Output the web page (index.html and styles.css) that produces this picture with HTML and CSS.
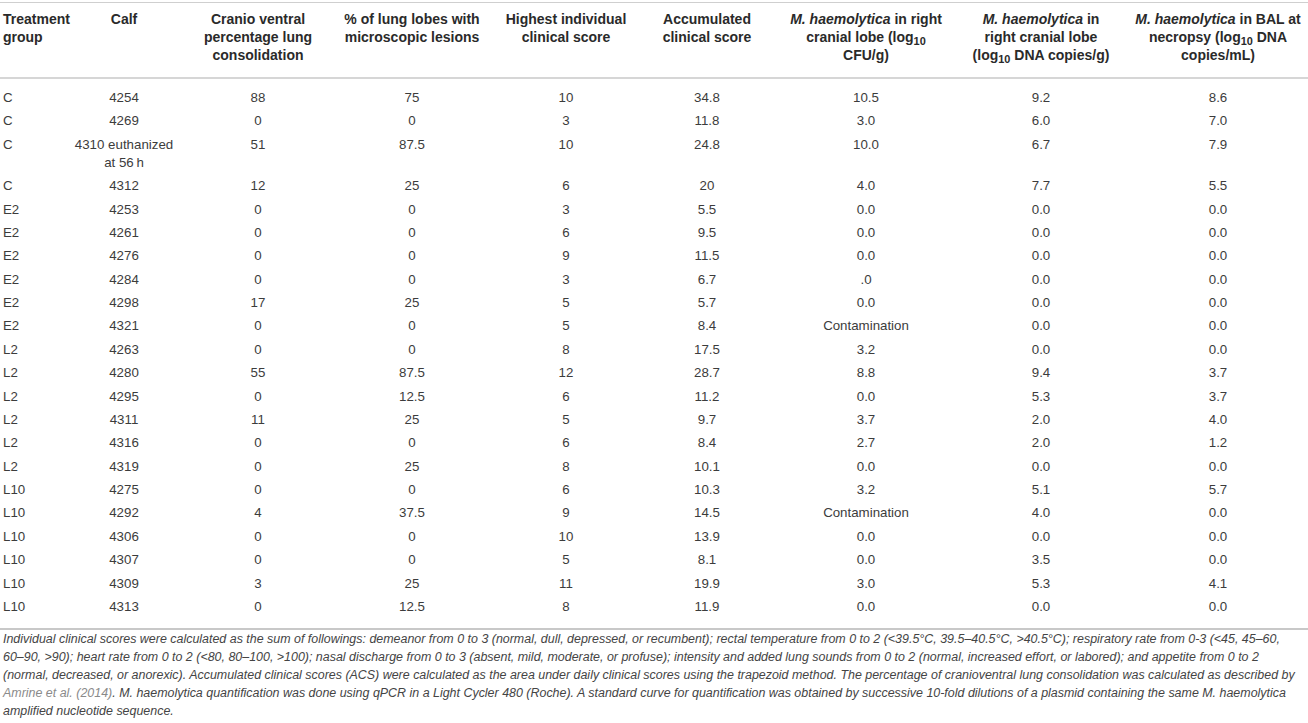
FILE: index.html
```html
<!DOCTYPE html>
<html lang="en">
<head>
<meta charset="utf-8">
<title>Table</title>
<link rel="stylesheet" href="styles.css">
</head>
<body>
<div class="page">
<table class="data">
<colgroup>
<col class="c1"><col class="c2"><col class="c3"><col class="c4"><col class="c5"><col class="c6"><col class="c7"><col class="c8"><col class="c9">
</colgroup>
<thead>
<tr>
<th class="first">Treatment group</th>
<th>Calf</th>
<th>Cranio ventral percentage lung consolidation</th>
<th>% of lung lobes with microscopic lesions</th>
<th>Highest individual clinical score</th>
<th>Accumulated clinical score</th>
<th class="narrow"><i>M. haemolytica</i> in right cranial lobe (log<sub>10</sub> CFU/g)</th>
<th><i>M. haemolytica</i> in right cranial lobe (log<sub>10</sub> DNA copies/g)</th>
<th class="last"><i>M. haemolytica</i> in BAL at necropsy (log<sub>10</sub> DNA copies/mL)</th>
</tr>
</thead>
<tbody>
<tr><td class="first">C</td><td>4254</td><td>88</td><td>75</td><td>10</td><td>34.8</td><td>10.5</td><td>9.2</td><td class="last">8.6</td></tr>
<tr><td class="first">C</td><td>4269</td><td>0</td><td>0</td><td>3</td><td>11.8</td><td>3.0</td><td>6.0</td><td class="last">7.0</td></tr>
<tr><td class="first">C</td><td>4310 euthanized at 56&#8201;h</td><td>51</td><td>87.5</td><td>10</td><td>24.8</td><td>10.0</td><td>6.7</td><td class="last">7.9</td></tr>
<tr><td class="first">C</td><td>4312</td><td>12</td><td>25</td><td>6</td><td>20</td><td>4.0</td><td>7.7</td><td class="last">5.5</td></tr>
<tr><td class="first">E2</td><td>4253</td><td>0</td><td>0</td><td>3</td><td>5.5</td><td>0.0</td><td>0.0</td><td class="last">0.0</td></tr>
<tr><td class="first">E2</td><td>4261</td><td>0</td><td>0</td><td>6</td><td>9.5</td><td>0.0</td><td>0.0</td><td class="last">0.0</td></tr>
<tr><td class="first">E2</td><td>4276</td><td>0</td><td>0</td><td>9</td><td>11.5</td><td>0.0</td><td>0.0</td><td class="last">0.0</td></tr>
<tr><td class="first">E2</td><td>4284</td><td>0</td><td>0</td><td>3</td><td>6.7</td><td>.0</td><td>0.0</td><td class="last">0.0</td></tr>
<tr><td class="first">E2</td><td>4298</td><td>17</td><td>25</td><td>5</td><td>5.7</td><td>0.0</td><td>0.0</td><td class="last">0.0</td></tr>
<tr><td class="first">E2</td><td>4321</td><td>0</td><td>0</td><td>5</td><td>8.4</td><td>Contamination</td><td>0.0</td><td class="last">0.0</td></tr>
<tr><td class="first">L2</td><td>4263</td><td>0</td><td>0</td><td>8</td><td>17.5</td><td>3.2</td><td>0.0</td><td class="last">0.0</td></tr>
<tr><td class="first">L2</td><td>4280</td><td>55</td><td>87.5</td><td>12</td><td>28.7</td><td>8.8</td><td>9.4</td><td class="last">3.7</td></tr>
<tr><td class="first">L2</td><td>4295</td><td>0</td><td>12.5</td><td>6</td><td>11.2</td><td>0.0</td><td>5.3</td><td class="last">3.7</td></tr>
<tr><td class="first">L2</td><td>4311</td><td>11</td><td>25</td><td>5</td><td>9.7</td><td>3.7</td><td>2.0</td><td class="last">4.0</td></tr>
<tr><td class="first">L2</td><td>4316</td><td>0</td><td>0</td><td>6</td><td>8.4</td><td>2.7</td><td>2.0</td><td class="last">1.2</td></tr>
<tr><td class="first">L2</td><td>4319</td><td>0</td><td>25</td><td>8</td><td>10.1</td><td>0.0</td><td>0.0</td><td class="last">0.0</td></tr>
<tr><td class="first">L10</td><td>4275</td><td>0</td><td>0</td><td>6</td><td>10.3</td><td>3.2</td><td>5.1</td><td class="last">5.7</td></tr>
<tr><td class="first">L10</td><td>4292</td><td>4</td><td>37.5</td><td>9</td><td>14.5</td><td>Contamination</td><td>4.0</td><td class="last">0.0</td></tr>
<tr><td class="first">L10</td><td>4306</td><td>0</td><td>0</td><td>10</td><td>13.9</td><td>0.0</td><td>0.0</td><td class="last">0.0</td></tr>
<tr><td class="first">L10</td><td>4307</td><td>0</td><td>0</td><td>5</td><td>8.1</td><td>0.0</td><td>3.5</td><td class="last">0.0</td></tr>
<tr><td class="first">L10</td><td>4309</td><td>3</td><td>25</td><td>11</td><td>19.9</td><td>3.0</td><td>5.3</td><td class="last">4.1</td></tr>
<tr><td class="first">L10</td><td>4313</td><td>0</td><td>12.5</td><td>8</td><td>11.9</td><td>0.0</td><td>0.0</td><td class="last">0.0</td></tr>
</tbody>
</table>
<p class="note">Individual clinical scores were calculated as the sum of followings: demeanor from 0 to 3 (normal, dull, depressed, or recumbent); rectal temperature from 0 to 2 (&lt;39.5°C, 39.5–40.5°C, &gt;40.5°C); respiratory rate from 0-3 (&lt;45, 45–60, 60–90, &gt;90); heart rate from 0 to 2 (&lt;80, 80–100, &gt;100); nasal discharge from 0 to 3 (absent, mild, moderate, or profuse); intensity and added lung sounds from 0 to 2 (normal, increased effort, or labored); and appetite from 0 to 2 (normal, decreased, or anorexic). Accumulated clinical scores (ACS) were calculated as the area under daily clinical scores using the trapezoid method. The percentage of cranioventral lung consolidation was calculated as described by <a class="ref" href="#">Amrine et al. (2014)</a>. M. haemolytica quantification was done using qPCR in a Light Cycler 480 (Roche). A standard curve for quantification was obtained by successive 10-fold dilutions of a plasmid containing the same M. haemolytica amplified nucleotide sequence.</p>
</div>
</body>
</html>
```

FILE: styles.css
```css
html, body {
  margin: 0;
  padding: 0;
  background: #ffffff;
}

.page {
  padding-top: 2px;
  width: 1308px;
  font-family: "Liberation Sans", Arial, Helvetica, sans-serif;
}

.data {
  width: 1308px;
  table-layout: fixed;
  border-collapse: collapse;
  border-top: 1px solid #cfcfcf;
  border-bottom: 2px solid #c8c8c8;
}

.c1 { width: 72px; }
.c2 { width: 104px; }
.c3 { width: 164px; }
.c4 { width: 144px; }
.c5 { width: 164px; }
.c6 { width: 118px; }
.c7 { width: 200px; }
.c8 { width: 150px; }
.c9 { width: 192px; }

.data th {
  font-size: 14px;
  line-height: 18px;
  font-weight: bold;
  color: #2a2a2a;
  text-align: center;
  vertical-align: top;
  padding: 7px 2px 13px 2px;
  border-bottom: 2px solid #d6d6d6;
}

.data th i {
  font-style: italic;
}

.data sub {
  font-size: 0.78em;
  line-height: 0;
  vertical-align: -0.3em;
}

.data td {
  font-size: 13.3px;
  line-height: 18px;
  color: #3c3c3c;
  text-align: center;
  vertical-align: top;
  padding: 2.7px 2px;
}

.data tbody tr:first-child td {
  padding-top: 10.1px;
}

.data tbody tr:last-child td {
  padding-bottom: 12px;
}

.data .first {
  text-align: left;
  padding-left: 3px;
  padding-right: 0;
}

.data .narrow {
  padding-left: 20px;
  padding-right: 20px;
}

.data .last {
  padding-left: 12px;
  padding-right: 0;
}

.note {
  margin: 0;
  padding: 0 4px 0 3px;
  font-size: 12.45px;
  line-height: 18px;
  font-style: italic;
  color: #444444;
}

.ref {
  color: #8a8a8a;
  text-decoration: none;
}
```
